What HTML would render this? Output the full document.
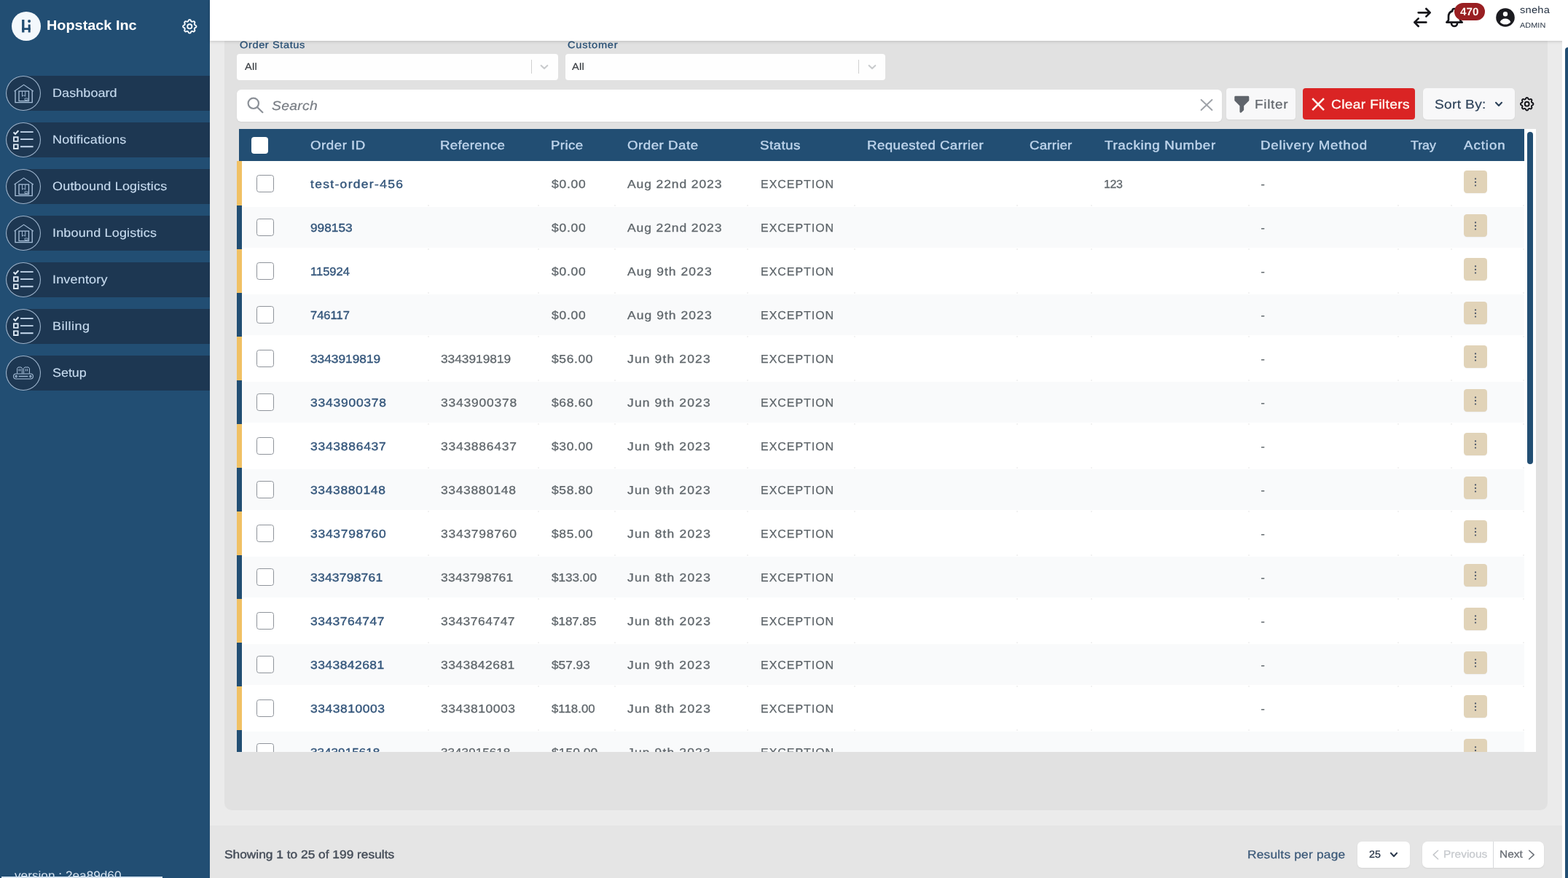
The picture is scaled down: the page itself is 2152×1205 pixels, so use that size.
<!DOCTYPE html>
<html lang="en">
<head>
<meta charset="utf-8">
<title>Hopstack Inc - Orders</title>
<style>
html,body{margin:0;padding:0}
html{width:2152px;height:1205px;overflow:hidden;background:#EBEBEB}
body{width:2152px;height:1205px;overflow:hidden;position:relative;background:#EBEBEB;font-family:"Liberation Sans",sans-serif;-webkit-font-smoothing:antialiased}
.a{position:absolute;box-sizing:border-box}
.t{position:absolute;white-space:nowrap;display:block;margin:0;padding:0;font-weight:400;text-decoration:none;transform-origin:0 50%;text-rendering:geometricPrecision}
svg{position:absolute;overflow:visible}
aside,header,main,footer,nav,section{position:absolute;display:block;margin:0;padding:0}
.g{will-change:transform}
</style>
</head>
<body>
<aside class="a g" style="left:0;top:0;width:288px;height:1205px;background:#224E73;overflow:hidden">
<div class="a" style="left:16px;top:16px;width:40px;height:40px;border-radius:50%;background:#F3F8FC"><svg width="40" height="40" viewBox="0 0 40 40" fill="#224E73"><rect x="14.1" y="11" width="3.3" height="17.5"/><rect x="14.1" y="22.3" width="11.6" height="2.7"/><rect x="22.7" y="17.6" width="3" height="10.9"/><circle cx="24.1" cy="13.1" r="2.05"/></svg></div>
<h1 class="t" style="left:63.51px;top:21px;font-size:18.8px;line-height:28px;color:#FFFFFF;transform:scaleX(1.057);font-weight:700;">Hopstack Inc</h1>
<svg class="a" style="left:247.9px;top:23.8px" width="24.6" height="24.6" viewBox="0 0 24 24" fill="none" stroke="#F4F8FC" stroke-width="1.9" stroke-linecap="round" stroke-linejoin="round"><path d="M10.325 4.317c.426-1.756 2.924-1.756 3.35 0a1.724 1.724 0 002.573 1.066c1.543-.94 3.31.826 2.37 2.37a1.724 1.724 0 001.065 2.572c1.756.426 1.756 2.924 0 3.35a1.724 1.724 0 00-1.066 2.573c.94 1.543-.826 3.31-2.37 2.37a1.724 1.724 0 00-2.572 1.065c-.426 1.756-2.924 1.756-3.35 0a1.724 1.724 0 00-2.573-1.066c-1.543.94-3.31-.826-2.37-2.37a1.724 1.724 0 00-1.065-2.572c-1.756-.426-1.756-2.924 0-3.35a1.724 1.724 0 001.066-2.573c-.94-1.543.826-3.31 2.37-2.37.996.608 2.296.07 2.572-1.065z"/><circle cx="12" cy="12" r="3"/></svg>
<nav class="a" style="left:0;top:0;width:288px;height:560px">
<a class="a" style="left:0;top:104px;width:288px;height:48px;display:block">
<div class="a" style="left:32px;top:0;width:256px;height:48px;background:#1D3752"></div>
<div class="a" style="left:8px;top:0;width:48px;height:48px;border-radius:50%;background:#1D3752;box-shadow:inset 0 0 0 1.1px #9DB5CE"></div>
<div class="a" style="left:8px;top:0;width:48px;height:48px"><svg width="48" height="48" viewBox="0 0 48 48" fill="none" stroke="#A9C1DB" stroke-width="1.1" stroke-linejoin="miter"><path d="M11.6 21.2 24.6 12.4 37.8 21.2"/><path d="M13 20.6V36.6H36.2V20.6" stroke-width="1.35"/><path d="M18 21.2H31.5V34.6H18Z" stroke-width="1.3"/><path d="M22.5 21.4V28.2L24.6 26.6 26.7 28.2V21.4" stroke-width="0.9"/><path d="M26 31H30V33.4H26Z" stroke-width="0.8"/></svg></div>
<span class="t" style="left:71.83px;top:11px;font-size:16.4px;line-height:26px;color:#C6DAEE;letter-spacing:0.05px;transform:scaleX(1.1);-webkit-text-stroke:0.15px #C6DAEE;">Dashboard</span>
</a>
<a class="a" style="left:0;top:168px;width:288px;height:48px;display:block">
<div class="a" style="left:32px;top:0;width:256px;height:48px;background:#1D3752"></div>
<div class="a" style="left:8px;top:0;width:48px;height:48px;border-radius:50%;background:#1D3752;box-shadow:inset 0 0 0 1.1px #9DB5CE"></div>
<div class="a" style="left:8px;top:0;width:48px;height:48px"><svg width="48" height="48" viewBox="0 0 48 48" fill="none" stroke="#DCE8F4" stroke-width="2"><path d="M10.6 13.6 13 16 17.4 11.2" stroke-width="2.1"/><path d="M20 13.1H37.6M20 23.1H37.6M20 33.2H37.6" stroke="#C9DCF0" stroke-width="1.9"/><path d="M11 20.3H16.6V25.9H11ZM11 30.4H16.6V36H11Z" stroke-width="1.9"/></svg></div>
<span class="t" style="left:71.83px;top:11px;font-size:16.4px;line-height:26px;color:#C6DAEE;letter-spacing:0.23px;transform:scaleX(1.1);-webkit-text-stroke:0.15px #C6DAEE;">Notifications</span>
</a>
<a class="a" style="left:0;top:232px;width:288px;height:48px;display:block">
<div class="a" style="left:32px;top:0;width:256px;height:48px;background:#1D3752"></div>
<div class="a" style="left:8px;top:0;width:48px;height:48px;border-radius:50%;background:#1D3752;box-shadow:inset 0 0 0 1.1px #9DB5CE"></div>
<div class="a" style="left:8px;top:0;width:48px;height:48px"><svg width="48" height="48" viewBox="0 0 48 48" fill="none" stroke="#A9C1DB" stroke-width="1.1" stroke-linejoin="miter"><path d="M11.6 21.2 24.6 12.4 37.8 21.2"/><path d="M13 20.6V36.6H36.2V20.6" stroke-width="1.35"/><path d="M18 21.2H31.5V34.6H18Z" stroke-width="1.3"/><path d="M22.5 21.4V28.2L24.6 26.6 26.7 28.2V21.4" stroke-width="0.9"/><path d="M26 31H30V33.4H26Z" stroke-width="0.8"/></svg></div>
<span class="t" style="left:72.46px;top:11px;font-size:16.4px;line-height:26px;color:#C6DAEE;letter-spacing:0.15px;transform:scaleX(1.1);-webkit-text-stroke:0.15px #C6DAEE;">Outbound Logistics</span>
</a>
<a class="a" style="left:0;top:296px;width:288px;height:48px;display:block">
<div class="a" style="left:32px;top:0;width:256px;height:48px;background:#1D3752"></div>
<div class="a" style="left:8px;top:0;width:48px;height:48px;border-radius:50%;background:#1D3752;box-shadow:inset 0 0 0 1.1px #9DB5CE"></div>
<div class="a" style="left:8px;top:0;width:48px;height:48px"><svg width="48" height="48" viewBox="0 0 48 48" fill="none" stroke="#A9C1DB" stroke-width="1.1" stroke-linejoin="miter"><path d="M11.6 21.2 24.6 12.4 37.8 21.2"/><path d="M13 20.6V36.6H36.2V20.6" stroke-width="1.35"/><path d="M18 21.2H31.5V34.6H18Z" stroke-width="1.3"/><path d="M22.5 21.4V28.2L24.6 26.6 26.7 28.2V21.4" stroke-width="0.9"/><path d="M26 31H30V33.4H26Z" stroke-width="0.8"/></svg></div>
<span class="t" style="left:71.65px;top:11px;font-size:16.4px;line-height:26px;color:#C6DAEE;letter-spacing:0.15px;transform:scaleX(1.1);-webkit-text-stroke:0.15px #C6DAEE;">Inbound Logistics</span>
</a>
<a class="a" style="left:0;top:360px;width:288px;height:48px;display:block">
<div class="a" style="left:32px;top:0;width:256px;height:48px;background:#1D3752"></div>
<div class="a" style="left:8px;top:0;width:48px;height:48px;border-radius:50%;background:#1D3752;box-shadow:inset 0 0 0 1.1px #9DB5CE"></div>
<div class="a" style="left:8px;top:0;width:48px;height:48px"><svg width="48" height="48" viewBox="0 0 48 48" fill="none" stroke="#DCE8F4" stroke-width="2"><path d="M10.6 13.6 13 16 17.4 11.2" stroke-width="2.1"/><path d="M20 13.1H37.6M20 23.1H37.6M20 33.2H37.6" stroke="#C9DCF0" stroke-width="1.9"/><path d="M11 20.3H16.6V25.9H11ZM11 30.4H16.6V36H11Z" stroke-width="1.9"/></svg></div>
<span class="t" style="left:71.65px;top:11px;font-size:16.4px;line-height:26px;color:#C6DAEE;letter-spacing:0.15px;transform:scaleX(1.1);-webkit-text-stroke:0.15px #C6DAEE;">Inventory</span>
</a>
<a class="a" style="left:0;top:424px;width:288px;height:48px;display:block">
<div class="a" style="left:32px;top:0;width:256px;height:48px;background:#1D3752"></div>
<div class="a" style="left:8px;top:0;width:48px;height:48px;border-radius:50%;background:#1D3752;box-shadow:inset 0 0 0 1.1px #9DB5CE"></div>
<div class="a" style="left:8px;top:0;width:48px;height:48px"><svg width="48" height="48" viewBox="0 0 48 48" fill="none" stroke="#DCE8F4" stroke-width="2"><path d="M10.6 13.6 13 16 17.4 11.2" stroke-width="2.1"/><path d="M20 13.1H37.6M20 23.1H37.6M20 33.2H37.6" stroke="#C9DCF0" stroke-width="1.9"/><path d="M11 20.3H16.6V25.9H11ZM11 30.4H16.6V36H11Z" stroke-width="1.9"/></svg></div>
<span class="t" style="left:71.83px;top:11px;font-size:16.4px;line-height:26px;color:#C6DAEE;letter-spacing:0.44px;transform:scaleX(1.1);-webkit-text-stroke:0.15px #C6DAEE;">Billing</span>
</a>
<a class="a" style="left:0;top:488px;width:288px;height:48px;display:block">
<div class="a" style="left:32px;top:0;width:256px;height:48px;background:#1D3752"></div>
<div class="a" style="left:8px;top:0;width:48px;height:48px;border-radius:50%;background:#1D3752;box-shadow:inset 0 0 0 1.1px #9DB5CE"></div>
<div class="a" style="left:8px;top:0;width:48px;height:48px"><svg width="48" height="48" viewBox="0 0 48 48" fill="none" stroke="#A9C1DB" stroke-width="1.1"><rect x="10.6" y="25" width="26.8" height="7" rx="3.5"/><path d="M17.6 28.5H30.4" stroke-width="1.3"/><circle cx="14.2" cy="28.5" r="1.1"/><circle cx="33.8" cy="28.5" r="1.1"/><path d="M15.6 24.6V17.4L17 16H21L22.4 17.4V24.6M24.6 24.6V17.4L26 16H31L32.4 17.4V24.6" stroke-width="1"/><path d="M18 18.4V21.4M20 18.4V21.4M27.4 18.4V21.4M29.6 18.4V21.4" stroke-width="1"/></svg></div>
<span class="t" style="left:72.47px;top:11px;font-size:16.4px;line-height:26px;color:#C6DAEE;transform:scaleX(1.092);-webkit-text-stroke:0.15px #C6DAEE;">Setup</span>
</a>
</nav>
<span class="t" style="left:20.16px;top:1189px;font-size:16.4px;line-height:26px;color:#D6E3F0;transform:scaleX(1.051);">version : 2ea89d60</span>
<div class="a" style="left:2px;top:1203px;width:221px;height:2px;background:#D9E6F2"></div>
</aside>
<header class="a g" style="left:0;top:0;width:2152px;height:0;z-index:5">
<div class="a" style="left:288px;top:0px;width:1864px;height:56px;background:#FFFFFF;box-shadow:0 1px 4px rgba(0,0,0,.17);"></div>
<svg class="a" style="left:1936px;top:7.5px" width="32" height="32" viewBox="0 0 24 24" fill="none" stroke="#17171C" stroke-width="2" stroke-linecap="round" stroke-linejoin="round"><path d="M8 7h12m0 0l-4-4m4 4l-4 4m0 6H4m0 0l4 4m-4-4l4-4"/></svg>
<svg class="a" style="left:1979.7px;top:8px" width="32" height="32" viewBox="0 0 24 24" fill="none" stroke="#17171C" stroke-width="2" stroke-linecap="round" stroke-linejoin="round"><path d="M15 17h5l-1.405-1.405A2.032 2.032 0 0118 14.158V11a6.002 6.002 0 00-4-5.659V5a2 2 0 10-4 0v.341C7.67 6.165 6 8.388 6 11v3.159c0 .538-.214 1.055-.595 1.436L4 17h5m6 0v1a3 3 0 11-6 0v-1m6 0H9"/></svg>
<div class="a" style="left:1996.1px;top:3.9px;width:41.9px;height:24px;background:#991F22;border-radius:12px;"></div>
<span class="t" style="left:2004.27px;top:6px;font-size:14.8px;line-height:22px;color:#FFF7F2;transform:scaleX(1.029);font-weight:700;">470</span>
<svg class="a" style="left:2050px;top:7.9px" width="32" height="32" viewBox="0 0 20 20" fill="#1B1B20"><path fill-rule="evenodd" d="M18 10a8 8 0 11-16 0 8 8 0 0116 0zm-6-3a2 2 0 11-4 0 2 2 0 014 0zm-2 4a5 5 0 00-4.546 2.916A5.986 5.986 0 0010 16a5.986 5.986 0 004.546-2.084A5 5 0 0010 11z" clip-rule="evenodd"/></svg>
<span class="t" style="left:2085.8px;top:4px;font-size:13.3px;line-height:20px;color:#1E2B3C;letter-spacing:0.24px;transform:scaleX(1.1);">sneha</span>
<span class="t" style="left:2086.2px;top:28px;font-size:9.9px;line-height:16px;color:#1E2B3C;letter-spacing:0.06px;transform:scaleX(1.1);">ADMIN</span>
</header>
<main class="a g" style="left:0;top:0;width:2152px;height:0">
<div class="a" style="left:308px;top:40px;width:1816px;height:1072px;background:#E1E1E1;border-radius:10px;"></div>
<label class="t" style="left:328.69px;top:52px;font-size:13.3px;line-height:20px;color:#2A5176;letter-spacing:0.53px;transform:scaleX(1.1);-webkit-text-stroke:0.3px #2A5176;">Order Status</label>
<label class="t" style="left:778.62px;top:52px;font-size:13.3px;line-height:20px;color:#2A5176;letter-spacing:0.67px;transform:scaleX(1.1);-webkit-text-stroke:0.3px #2A5176;">Customer</label>
<div class="a" style="left:324.8px;top:74px;width:441.2px;height:36px;background:#FEFEFE;border-radius:4px;"></div>
<span class="t" style="left:335.88px;top:82px;font-size:13.3px;line-height:20px;color:#33373C;letter-spacing:0.24px;transform:scaleX(1.1);-webkit-text-stroke:0.15px #33373C;">All</span>
<div class="a" style="left:728.8px;top:82.2px;width:1px;height:19.2px;background:#CFCFCF;"></div>
<svg class="a" style="left:737.4px;top:82.3px" width="20" height="20" viewBox="0 0 20 20" fill="none" stroke="#C9CBCD" stroke-width="2.1" stroke-linecap="round" stroke-linejoin="round"><path d="M5.7 7.9 10 12.1 14.3 7.9"/></svg>
<div class="a" style="left:775.9px;top:74px;width:439.6px;height:36px;background:#FEFEFE;border-radius:4px;"></div>
<span class="t" style="left:785.38px;top:82px;font-size:13.3px;line-height:20px;color:#33373C;letter-spacing:0.24px;transform:scaleX(1.1);-webkit-text-stroke:0.15px #33373C;">All</span>
<div class="a" style="left:1178.3px;top:82.2px;width:1px;height:19.2px;background:#CFCFCF;"></div>
<svg class="a" style="left:1186.9px;top:82.3px" width="20" height="20" viewBox="0 0 20 20" fill="none" stroke="#C9CBCD" stroke-width="2.1" stroke-linecap="round" stroke-linejoin="round"><path d="M5.7 7.9 10 12.1 14.3 7.9"/></svg>
<div class="a" style="left:325px;top:122.6px;width:1351.6px;height:44px;background:#FFFFFF;border-radius:6px;box-shadow:0 1px 2px rgba(0,0,0,.06);"></div>
<svg class="a" style="left:336px;top:130px" width="30" height="30" viewBox="0 0 30 30" fill="none" stroke="#8C9198" stroke-width="2.2" stroke-linecap="round"><circle cx="11.8" cy="11.8" r="7.2"/><path d="M17.2 17.2 24.4 24.2"/></svg>
<span class="t" style="left:373.37px;top:132px;font-size:17.6px;line-height:26px;color:#787D84;letter-spacing:0.24px;transform:scaleX(1.1);font-style:italic;-webkit-text-stroke:0.2px #787D84;">Search</span>
<svg class="a" style="left:1645.6px;top:134.4px" width="20" height="20" viewBox="0 0 20 20" fill="none" stroke="#9EA2A8" stroke-width="1.9" stroke-linecap="round"><path d="M2.6 3 17.4 17M17.4 3 2.6 17"/></svg>
<div class="a" style="left:1682.5px;top:121px;width:95px;height:43.4px;background:#F8F8F9;border-radius:4px;box-shadow:0 1px 2px rgba(0,0,0,.05);"></div>
<svg class="a" style="left:1690.1px;top:128.5px" width="28.6" height="28.6" viewBox="0 0 20 20" fill="#5F646B"><path fill-rule="evenodd" d="M3 3a1 1 0 011-1h12a1 1 0 011 1v3a1 1 0 01-.293.707L12 11.414V15a1 1 0 01-.293.707l-2 2A1 1 0 018 17v-5.586L3.293 6.707A1 1 0 013 6V3z" clip-rule="evenodd"/></svg>
<span class="t" style="left:1722.37px;top:130px;font-size:17.4px;line-height:26px;color:#62676D;letter-spacing:0.56px;transform:scaleX(1.1);-webkit-text-stroke:0.2px #62676D;">Filter</span>
<div class="a" style="left:1787.5px;top:121px;width:154.7px;height:43.4px;background:#DA2424;border-radius:4px;"></div>
<svg class="a" style="left:1798.5px;top:132.5px" width="20" height="20" viewBox="0 0 20 20" fill="none" stroke="#FFF6EE" stroke-width="2.6" stroke-linecap="butt"><path d="M2.2 2.2 18 18.2M18 2.2 2.2 18.2"/></svg>
<span class="t" style="left:1826.92px;top:130px;font-size:17.4px;line-height:26px;color:#FFF8F2;letter-spacing:0.33px;transform:scaleX(1.1);-webkit-text-stroke:0.35px #FFF8F2;">Clear Filters</span>
<div class="a" style="left:1952.6px;top:121px;width:126.1px;height:43.4px;background:#F8F8F9;border-radius:5px;box-shadow:0 1px 2px rgba(0,0,0,.05);"></div>
<span class="t" style="left:1968.54px;top:130px;font-size:17.4px;line-height:26px;color:#2E435A;letter-spacing:0.3px;transform:scaleX(1.1);-webkit-text-stroke:0.2px #2E435A;">Sort By:</span>
<svg class="a" style="left:2049.9px;top:135.8px" width="14" height="14" viewBox="0 0 14 14" fill="none" stroke="#2E435A" stroke-width="2.1" stroke-linecap="round" stroke-linejoin="round"><path d="M3 4.8 7 9 11 4.8"/></svg>
<svg class="a" style="left:2083.8px;top:131px" width="23.4" height="23.4" viewBox="0 0 24 24" fill="none" stroke="#131318" stroke-width="2" stroke-linecap="round" stroke-linejoin="round"><path d="M10.325 4.317c.426-1.756 2.924-1.756 3.35 0a1.724 1.724 0 002.573 1.066c1.543-.94 3.31.826 2.37 2.37a1.724 1.724 0 001.065 2.572c1.756.426 1.756 2.924 0 3.35a1.724 1.724 0 00-1.066 2.573c.94 1.543-.826 3.31-2.37 2.37a1.724 1.724 0 00-2.572 1.065c-.426 1.756-2.924 1.756-3.35 0a1.724 1.724 0 00-2.573-1.066c-1.543.94-3.31-.826-2.37-2.37a1.724 1.724 0 00-1.065-2.572c-1.756-.426-1.756-2.924 0-3.35a1.724 1.724 0 001.066-2.573c-.94-1.543.826-3.31 2.37-2.37.996.608 2.296.07 2.572-1.065z"/><circle cx="12" cy="12" r="3"/></svg>
<section class="a" style="left:0;top:0;width:2152px;height:1032px;overflow:hidden">
<div class="a" style="left:324.6px;top:177px;width:1783px;height:855px;background:#FFFFFF;"></div>
<div class="a" style="left:324.6px;top:177px;width:3.5px;height:44.2px;background:#E1E1E1;"></div>
<div class="a" style="left:328.1px;top:177px;width:1763.9px;height:44.2px;background:#224E73;"></div>
<div class="a" style="left:344.8px;top:188.1px;width:22.8px;height:23.1px;background:#FFFFFF;border-radius:4px;"></div>
<span class="t" style="left:425.96px;top:187px;font-size:17px;line-height:26px;color:#BFD5EC;letter-spacing:0.47px;transform:scaleX(1.1);-webkit-text-stroke:0.4px #BFD5EC;">Order ID</span>
<span class="t" style="left:604.1px;top:187px;font-size:17px;line-height:26px;color:#BFD5EC;letter-spacing:0.29px;transform:scaleX(1.1);-webkit-text-stroke:0.4px #BFD5EC;">Reference</span>
<span class="t" style="left:755.8px;top:187px;font-size:17px;line-height:26px;color:#BFD5EC;letter-spacing:0.35px;transform:scaleX(1.1);-webkit-text-stroke:0.4px #BFD5EC;">Price</span>
<span class="t" style="left:860.96px;top:187px;font-size:17px;line-height:26px;color:#BFD5EC;letter-spacing:0.46px;transform:scaleX(1.1);-webkit-text-stroke:0.4px #BFD5EC;">Order Date</span>
<span class="t" style="left:1042.96px;top:187px;font-size:17px;line-height:26px;color:#BFD5EC;letter-spacing:0.42px;transform:scaleX(1.1);-webkit-text-stroke:0.4px #BFD5EC;">Status</span>
<span class="t" style="left:1190.1px;top:187px;font-size:17px;line-height:26px;color:#BFD5EC;letter-spacing:0.39px;transform:scaleX(1.1);-webkit-text-stroke:0.4px #BFD5EC;">Requested Carrier</span>
<span class="t" style="left:1413.37px;top:187px;font-size:17px;line-height:26px;color:#BFD5EC;letter-spacing:0.18px;transform:scaleX(1.1);-webkit-text-stroke:0.4px #BFD5EC;">Carrier</span>
<span class="t" style="left:1515.83px;top:187px;font-size:17px;line-height:26px;color:#BFD5EC;letter-spacing:0.61px;transform:scaleX(1.1);-webkit-text-stroke:0.4px #BFD5EC;">Tracking Number</span>
<span class="t" style="left:1729.8px;top:187px;font-size:17px;line-height:26px;color:#BFD5EC;letter-spacing:0.71px;transform:scaleX(1.1);-webkit-text-stroke:0.4px #BFD5EC;">Delivery Method</span>
<span class="t" style="left:1936.04px;top:187px;font-size:17px;line-height:26px;color:#BFD5EC;transform:scaleX(1.045);-webkit-text-stroke:0.4px #BFD5EC;">Tray</span>
<span class="t" style="left:2009.4px;top:187px;font-size:17px;line-height:26px;color:#BFD5EC;letter-spacing:0.86px;transform:scaleX(1.1);-webkit-text-stroke:0.4px #BFD5EC;">Action</span>
<div class="a" style="left:324.6px;top:221.2px;width:7.6px;height:60.8px;background:#F0C164;"></div>
<div class="a" style="left:352.1px;top:240.1px;width:24px;height:23.9px;background:#FFFFFF;border-radius:3.6px;border:1.4px solid #8F949B;"></div>
<span class="t" style="left:425.84px;top:242px;font-size:15.9px;line-height:24px;color:#34567B;letter-spacing:1.2px;transform:scaleX(1.1);-webkit-text-stroke:0.4px #34567B;">test-order-456</span>
<span class="t" style="left:757.08px;top:242px;font-size:15.9px;line-height:24px;color:#5F666B;letter-spacing:0.66px;transform:scaleX(1.1);-webkit-text-stroke:0.3px #5F666B;">$0.00</span>
<span class="t" style="left:861.15px;top:242px;font-size:15.9px;line-height:24px;color:#5F666B;letter-spacing:0.82px;transform:scaleX(1.1);-webkit-text-stroke:0.3px #5F666B;">Aug 22nd 2023</span>
<span class="t" style="left:1044.08px;top:242px;font-size:15.9px;line-height:24px;color:#5F666B;letter-spacing:1.02px;-webkit-text-stroke:0.3px #5F666B;">EXCEPTION</span>
<span class="t" style="left:1515.06px;top:242px;font-size:15.9px;line-height:24px;color:#5F666B;letter-spacing:-0.35px;-webkit-text-stroke:0.3px #5F666B;">123</span>
<span class="t" style="left:1730.57px;top:242px;font-size:15.9px;line-height:24px;color:#5F666B;-webkit-text-stroke:0.3px #5F666B;">-</span>
<div class="a" style="left:2009.2px;top:234.1px;width:31.7px;height:31.4px;background:#E1D3B8;border-radius:4.2px;box-shadow:0 1px 1px rgba(0,0,0,.04);"><svg class="a" style="left:8px;top:8px" width="16" height="16" viewBox="0 0 16 16" fill="#4F596A"><circle cx="8" cy="3.4" r="1.15"/><circle cx="8" cy="8" r="1.15"/><circle cx="8" cy="12.6" r="1.15"/></svg></div>
<div class="a" style="left:324.6px;top:282px;width:7.6px;height:60px;background:#224E73;"></div>
<div class="a" style="left:332.2px;top:283.8px;width:1759.8px;height:56.7px;background:#F9FAFB;"></div>
<div class="a" style="left:352.1px;top:300.1px;width:24px;height:23.9px;background:#FFFFFF;border-radius:3.6px;border:1.4px solid #8F949B;"></div>
<span class="t" style="left:426.02px;top:302px;font-size:15.9px;line-height:24px;color:#34567B;transform:scaleX(1.089);-webkit-text-stroke:0.4px #34567B;">998153</span>
<span class="t" style="left:757.08px;top:302px;font-size:15.9px;line-height:24px;color:#5F666B;letter-spacing:0.66px;transform:scaleX(1.1);-webkit-text-stroke:0.3px #5F666B;">$0.00</span>
<span class="t" style="left:861.15px;top:302px;font-size:15.9px;line-height:24px;color:#5F666B;letter-spacing:0.82px;transform:scaleX(1.1);-webkit-text-stroke:0.3px #5F666B;">Aug 22nd 2023</span>
<span class="t" style="left:1044.08px;top:302px;font-size:15.9px;line-height:24px;color:#5F666B;letter-spacing:1.02px;-webkit-text-stroke:0.3px #5F666B;">EXCEPTION</span>
<span class="t" style="left:1730.57px;top:302px;font-size:15.9px;line-height:24px;color:#5F666B;-webkit-text-stroke:0.3px #5F666B;">-</span>
<div class="a" style="left:2009.2px;top:294.1px;width:31.7px;height:31.4px;background:#E1D3B8;border-radius:4.2px;box-shadow:0 1px 1px rgba(0,0,0,.04);"><svg class="a" style="left:8px;top:8px" width="16" height="16" viewBox="0 0 16 16" fill="#4F596A"><circle cx="8" cy="3.4" r="1.15"/><circle cx="8" cy="8" r="1.15"/><circle cx="8" cy="12.6" r="1.15"/></svg></div>
<div class="a" style="left:324.6px;top:342px;width:7.6px;height:60px;background:#F0C164;"></div>
<div class="a" style="left:352.1px;top:360.1px;width:24px;height:23.9px;background:#FFFFFF;border-radius:3.6px;border:1.4px solid #8F949B;"></div>
<span class="t" style="left:425.56px;top:362px;font-size:15.9px;line-height:24px;color:#34567B;transform:scaleX(1.04);-webkit-text-stroke:0.4px #34567B;">115924</span>
<span class="t" style="left:757.08px;top:362px;font-size:15.9px;line-height:24px;color:#5F666B;letter-spacing:0.66px;transform:scaleX(1.1);-webkit-text-stroke:0.3px #5F666B;">$0.00</span>
<span class="t" style="left:861.15px;top:362px;font-size:15.9px;line-height:24px;color:#5F666B;letter-spacing:0.96px;transform:scaleX(1.1);-webkit-text-stroke:0.3px #5F666B;">Aug 9th 2023</span>
<span class="t" style="left:1044.08px;top:362px;font-size:15.9px;line-height:24px;color:#5F666B;letter-spacing:1.02px;-webkit-text-stroke:0.3px #5F666B;">EXCEPTION</span>
<span class="t" style="left:1730.57px;top:362px;font-size:15.9px;line-height:24px;color:#5F666B;-webkit-text-stroke:0.3px #5F666B;">-</span>
<div class="a" style="left:2009.2px;top:354.1px;width:31.7px;height:31.4px;background:#E1D3B8;border-radius:4.2px;box-shadow:0 1px 1px rgba(0,0,0,.04);"><svg class="a" style="left:8px;top:8px" width="16" height="16" viewBox="0 0 16 16" fill="#4F596A"><circle cx="8" cy="3.4" r="1.15"/><circle cx="8" cy="8" r="1.15"/><circle cx="8" cy="12.6" r="1.15"/></svg></div>
<div class="a" style="left:324.6px;top:402px;width:7.6px;height:60px;background:#224E73;"></div>
<div class="a" style="left:332.2px;top:403.8px;width:1759.8px;height:56.7px;background:#F9FAFB;"></div>
<div class="a" style="left:352.1px;top:420.1px;width:24px;height:23.9px;background:#FFFFFF;border-radius:3.6px;border:1.4px solid #8F949B;"></div>
<span class="t" style="left:425.97px;top:422px;font-size:15.9px;line-height:24px;color:#34567B;transform:scaleX(1.038);-webkit-text-stroke:0.4px #34567B;">746117</span>
<span class="t" style="left:757.08px;top:422px;font-size:15.9px;line-height:24px;color:#5F666B;letter-spacing:0.66px;transform:scaleX(1.1);-webkit-text-stroke:0.3px #5F666B;">$0.00</span>
<span class="t" style="left:861.15px;top:422px;font-size:15.9px;line-height:24px;color:#5F666B;letter-spacing:0.96px;transform:scaleX(1.1);-webkit-text-stroke:0.3px #5F666B;">Aug 9th 2023</span>
<span class="t" style="left:1044.08px;top:422px;font-size:15.9px;line-height:24px;color:#5F666B;letter-spacing:1.02px;-webkit-text-stroke:0.3px #5F666B;">EXCEPTION</span>
<span class="t" style="left:1730.57px;top:422px;font-size:15.9px;line-height:24px;color:#5F666B;-webkit-text-stroke:0.3px #5F666B;">-</span>
<div class="a" style="left:2009.2px;top:414.1px;width:31.7px;height:31.4px;background:#E1D3B8;border-radius:4.2px;box-shadow:0 1px 1px rgba(0,0,0,.04);"><svg class="a" style="left:8px;top:8px" width="16" height="16" viewBox="0 0 16 16" fill="#4F596A"><circle cx="8" cy="3.4" r="1.15"/><circle cx="8" cy="8" r="1.15"/><circle cx="8" cy="12.6" r="1.15"/></svg></div>
<div class="a" style="left:324.6px;top:462px;width:7.6px;height:60px;background:#F0C164;"></div>
<div class="a" style="left:352.1px;top:480.1px;width:24px;height:23.9px;background:#FFFFFF;border-radius:3.6px;border:1.4px solid #8F949B;"></div>
<span class="t" style="left:426.15px;top:482px;font-size:15.9px;line-height:24px;color:#34567B;transform:scaleX(1.088);-webkit-text-stroke:0.4px #34567B;">3343919819</span>
<span class="t" style="left:604.8px;top:482px;font-size:15.9px;line-height:24px;color:#5F666B;transform:scaleX(1.089);-webkit-text-stroke:0.3px #5F666B;">3343919819</span>
<span class="t" style="left:757.08px;top:482px;font-size:15.9px;line-height:24px;color:#5F666B;letter-spacing:0.54px;transform:scaleX(1.1);-webkit-text-stroke:0.3px #5F666B;">$56.00</span>
<span class="t" style="left:860.89px;top:482px;font-size:15.9px;line-height:24px;color:#5F666B;letter-spacing:1.04px;transform:scaleX(1.1);-webkit-text-stroke:0.3px #5F666B;">Jun 9th 2023</span>
<span class="t" style="left:1044.08px;top:482px;font-size:15.9px;line-height:24px;color:#5F666B;letter-spacing:1.02px;-webkit-text-stroke:0.3px #5F666B;">EXCEPTION</span>
<span class="t" style="left:1730.57px;top:482px;font-size:15.9px;line-height:24px;color:#5F666B;-webkit-text-stroke:0.3px #5F666B;">-</span>
<div class="a" style="left:2009.2px;top:474.1px;width:31.7px;height:31.4px;background:#E1D3B8;border-radius:4.2px;box-shadow:0 1px 1px rgba(0,0,0,.04);"><svg class="a" style="left:8px;top:8px" width="16" height="16" viewBox="0 0 16 16" fill="#4F596A"><circle cx="8" cy="3.4" r="1.15"/><circle cx="8" cy="8" r="1.15"/><circle cx="8" cy="12.6" r="1.15"/></svg></div>
<div class="a" style="left:324.6px;top:522px;width:7.6px;height:60px;background:#224E73;"></div>
<div class="a" style="left:332.2px;top:523.8px;width:1759.8px;height:56.7px;background:#F9FAFB;"></div>
<div class="a" style="left:352.1px;top:540.1px;width:24px;height:23.9px;background:#FFFFFF;border-radius:3.6px;border:1.4px solid #8F949B;"></div>
<span class="t" style="left:426.14px;top:542px;font-size:15.9px;line-height:24px;color:#34567B;letter-spacing:0.69px;transform:scaleX(1.1);-webkit-text-stroke:0.4px #34567B;">3343900378</span>
<span class="t" style="left:604.79px;top:542px;font-size:15.9px;line-height:24px;color:#5F666B;letter-spacing:0.7px;transform:scaleX(1.1);-webkit-text-stroke:0.3px #5F666B;">3343900378</span>
<span class="t" style="left:757.08px;top:542px;font-size:15.9px;line-height:24px;color:#5F666B;letter-spacing:0.54px;transform:scaleX(1.1);-webkit-text-stroke:0.3px #5F666B;">$68.60</span>
<span class="t" style="left:860.89px;top:542px;font-size:15.9px;line-height:24px;color:#5F666B;letter-spacing:1.04px;transform:scaleX(1.1);-webkit-text-stroke:0.3px #5F666B;">Jun 9th 2023</span>
<span class="t" style="left:1044.08px;top:542px;font-size:15.9px;line-height:24px;color:#5F666B;letter-spacing:1.02px;-webkit-text-stroke:0.3px #5F666B;">EXCEPTION</span>
<span class="t" style="left:1730.57px;top:542px;font-size:15.9px;line-height:24px;color:#5F666B;-webkit-text-stroke:0.3px #5F666B;">-</span>
<div class="a" style="left:2009.2px;top:534.1px;width:31.7px;height:31.4px;background:#E1D3B8;border-radius:4.2px;box-shadow:0 1px 1px rgba(0,0,0,.04);"><svg class="a" style="left:8px;top:8px" width="16" height="16" viewBox="0 0 16 16" fill="#4F596A"><circle cx="8" cy="3.4" r="1.15"/><circle cx="8" cy="8" r="1.15"/><circle cx="8" cy="12.6" r="1.15"/></svg></div>
<div class="a" style="left:324.6px;top:582px;width:7.6px;height:60px;background:#F0C164;"></div>
<div class="a" style="left:352.1px;top:600.1px;width:24px;height:23.9px;background:#FFFFFF;border-radius:3.6px;border:1.4px solid #8F949B;"></div>
<span class="t" style="left:426.14px;top:602px;font-size:15.9px;line-height:24px;color:#34567B;letter-spacing:0.66px;transform:scaleX(1.1);-webkit-text-stroke:0.4px #34567B;">3343886437</span>
<span class="t" style="left:604.79px;top:602px;font-size:15.9px;line-height:24px;color:#5F666B;letter-spacing:0.67px;transform:scaleX(1.1);-webkit-text-stroke:0.3px #5F666B;">3343886437</span>
<span class="t" style="left:757.08px;top:602px;font-size:15.9px;line-height:24px;color:#5F666B;letter-spacing:0.54px;transform:scaleX(1.1);-webkit-text-stroke:0.3px #5F666B;">$30.00</span>
<span class="t" style="left:860.89px;top:602px;font-size:15.9px;line-height:24px;color:#5F666B;letter-spacing:1.04px;transform:scaleX(1.1);-webkit-text-stroke:0.3px #5F666B;">Jun 9th 2023</span>
<span class="t" style="left:1044.08px;top:602px;font-size:15.9px;line-height:24px;color:#5F666B;letter-spacing:1.02px;-webkit-text-stroke:0.3px #5F666B;">EXCEPTION</span>
<span class="t" style="left:1730.57px;top:602px;font-size:15.9px;line-height:24px;color:#5F666B;-webkit-text-stroke:0.3px #5F666B;">-</span>
<div class="a" style="left:2009.2px;top:594.1px;width:31.7px;height:31.4px;background:#E1D3B8;border-radius:4.2px;box-shadow:0 1px 1px rgba(0,0,0,.04);"><svg class="a" style="left:8px;top:8px" width="16" height="16" viewBox="0 0 16 16" fill="#4F596A"><circle cx="8" cy="3.4" r="1.15"/><circle cx="8" cy="8" r="1.15"/><circle cx="8" cy="12.6" r="1.15"/></svg></div>
<div class="a" style="left:324.6px;top:642px;width:7.6px;height:60px;background:#224E73;"></div>
<div class="a" style="left:332.2px;top:643.8px;width:1759.8px;height:56.7px;background:#F9FAFB;"></div>
<div class="a" style="left:352.1px;top:660.1px;width:24px;height:23.9px;background:#FFFFFF;border-radius:3.6px;border:1.4px solid #8F949B;"></div>
<span class="t" style="left:426.14px;top:662px;font-size:15.9px;line-height:24px;color:#34567B;letter-spacing:0.57px;transform:scaleX(1.1);-webkit-text-stroke:0.4px #34567B;">3343880148</span>
<span class="t" style="left:604.79px;top:662px;font-size:15.9px;line-height:24px;color:#5F666B;letter-spacing:0.58px;transform:scaleX(1.1);-webkit-text-stroke:0.3px #5F666B;">3343880148</span>
<span class="t" style="left:757.08px;top:662px;font-size:15.9px;line-height:24px;color:#5F666B;letter-spacing:0.54px;transform:scaleX(1.1);-webkit-text-stroke:0.3px #5F666B;">$58.80</span>
<span class="t" style="left:860.89px;top:662px;font-size:15.9px;line-height:24px;color:#5F666B;letter-spacing:1.04px;transform:scaleX(1.1);-webkit-text-stroke:0.3px #5F666B;">Jun 9th 2023</span>
<span class="t" style="left:1044.08px;top:662px;font-size:15.9px;line-height:24px;color:#5F666B;letter-spacing:1.02px;-webkit-text-stroke:0.3px #5F666B;">EXCEPTION</span>
<span class="t" style="left:1730.57px;top:662px;font-size:15.9px;line-height:24px;color:#5F666B;-webkit-text-stroke:0.3px #5F666B;">-</span>
<div class="a" style="left:2009.2px;top:654.1px;width:31.7px;height:31.4px;background:#E1D3B8;border-radius:4.2px;box-shadow:0 1px 1px rgba(0,0,0,.04);"><svg class="a" style="left:8px;top:8px" width="16" height="16" viewBox="0 0 16 16" fill="#4F596A"><circle cx="8" cy="3.4" r="1.15"/><circle cx="8" cy="8" r="1.15"/><circle cx="8" cy="12.6" r="1.15"/></svg></div>
<div class="a" style="left:324.6px;top:702px;width:7.6px;height:60px;background:#F0C164;"></div>
<div class="a" style="left:352.1px;top:720.1px;width:24px;height:23.9px;background:#FFFFFF;border-radius:3.6px;border:1.4px solid #8F949B;"></div>
<span class="t" style="left:426.14px;top:722px;font-size:15.9px;line-height:24px;color:#34567B;letter-spacing:0.66px;transform:scaleX(1.1);-webkit-text-stroke:0.4px #34567B;">3343798760</span>
<span class="t" style="left:604.79px;top:722px;font-size:15.9px;line-height:24px;color:#5F666B;letter-spacing:0.67px;transform:scaleX(1.1);-webkit-text-stroke:0.3px #5F666B;">3343798760</span>
<span class="t" style="left:757.08px;top:722px;font-size:15.9px;line-height:24px;color:#5F666B;letter-spacing:0.54px;transform:scaleX(1.1);-webkit-text-stroke:0.3px #5F666B;">$85.00</span>
<span class="t" style="left:860.89px;top:722px;font-size:15.9px;line-height:24px;color:#5F666B;letter-spacing:1.06px;transform:scaleX(1.1);-webkit-text-stroke:0.3px #5F666B;">Jun 8th 2023</span>
<span class="t" style="left:1044.08px;top:722px;font-size:15.9px;line-height:24px;color:#5F666B;letter-spacing:1.02px;-webkit-text-stroke:0.3px #5F666B;">EXCEPTION</span>
<span class="t" style="left:1730.57px;top:722px;font-size:15.9px;line-height:24px;color:#5F666B;-webkit-text-stroke:0.3px #5F666B;">-</span>
<div class="a" style="left:2009.2px;top:714.1px;width:31.7px;height:31.4px;background:#E1D3B8;border-radius:4.2px;box-shadow:0 1px 1px rgba(0,0,0,.04);"><svg class="a" style="left:8px;top:8px" width="16" height="16" viewBox="0 0 16 16" fill="#4F596A"><circle cx="8" cy="3.4" r="1.15"/><circle cx="8" cy="8" r="1.15"/><circle cx="8" cy="12.6" r="1.15"/></svg></div>
<div class="a" style="left:324.6px;top:762px;width:7.6px;height:60px;background:#224E73;"></div>
<div class="a" style="left:332.2px;top:763.8px;width:1759.8px;height:56.7px;background:#F9FAFB;"></div>
<div class="a" style="left:352.1px;top:780.1px;width:24px;height:23.9px;background:#FFFFFF;border-radius:3.6px;border:1.4px solid #8F949B;"></div>
<span class="t" style="left:426.14px;top:782px;font-size:15.9px;line-height:24px;color:#34567B;letter-spacing:0.2px;transform:scaleX(1.1);-webkit-text-stroke:0.4px #34567B;">3343798761</span>
<span class="t" style="left:604.79px;top:782px;font-size:15.9px;line-height:24px;color:#5F666B;letter-spacing:0.21px;transform:scaleX(1.1);-webkit-text-stroke:0.3px #5F666B;">3343798761</span>
<span class="t" style="left:757.08px;top:782px;font-size:15.9px;line-height:24px;color:#5F666B;transform:scaleX(1.078);-webkit-text-stroke:0.3px #5F666B;">$133.00</span>
<span class="t" style="left:860.89px;top:782px;font-size:15.9px;line-height:24px;color:#5F666B;letter-spacing:1.06px;transform:scaleX(1.1);-webkit-text-stroke:0.3px #5F666B;">Jun 8th 2023</span>
<span class="t" style="left:1044.08px;top:782px;font-size:15.9px;line-height:24px;color:#5F666B;letter-spacing:1.02px;-webkit-text-stroke:0.3px #5F666B;">EXCEPTION</span>
<span class="t" style="left:1730.57px;top:782px;font-size:15.9px;line-height:24px;color:#5F666B;-webkit-text-stroke:0.3px #5F666B;">-</span>
<div class="a" style="left:2009.2px;top:774.1px;width:31.7px;height:31.4px;background:#E1D3B8;border-radius:4.2px;box-shadow:0 1px 1px rgba(0,0,0,.04);"><svg class="a" style="left:8px;top:8px" width="16" height="16" viewBox="0 0 16 16" fill="#4F596A"><circle cx="8" cy="3.4" r="1.15"/><circle cx="8" cy="8" r="1.15"/><circle cx="8" cy="12.6" r="1.15"/></svg></div>
<div class="a" style="left:324.6px;top:822px;width:7.6px;height:60px;background:#F0C164;"></div>
<div class="a" style="left:352.1px;top:840.1px;width:24px;height:23.9px;background:#FFFFFF;border-radius:3.6px;border:1.4px solid #8F949B;"></div>
<span class="t" style="left:426.14px;top:842px;font-size:15.9px;line-height:24px;color:#34567B;letter-spacing:0.43px;transform:scaleX(1.1);-webkit-text-stroke:0.4px #34567B;">3343764747</span>
<span class="t" style="left:604.79px;top:842px;font-size:15.9px;line-height:24px;color:#5F666B;letter-spacing:0.44px;transform:scaleX(1.1);-webkit-text-stroke:0.3px #5F666B;">3343764747</span>
<span class="t" style="left:757.08px;top:842px;font-size:15.9px;line-height:24px;color:#5F666B;transform:scaleX(1.07);-webkit-text-stroke:0.3px #5F666B;">$187.85</span>
<span class="t" style="left:860.89px;top:842px;font-size:15.9px;line-height:24px;color:#5F666B;letter-spacing:1.06px;transform:scaleX(1.1);-webkit-text-stroke:0.3px #5F666B;">Jun 8th 2023</span>
<span class="t" style="left:1044.08px;top:842px;font-size:15.9px;line-height:24px;color:#5F666B;letter-spacing:1.02px;-webkit-text-stroke:0.3px #5F666B;">EXCEPTION</span>
<span class="t" style="left:1730.57px;top:842px;font-size:15.9px;line-height:24px;color:#5F666B;-webkit-text-stroke:0.3px #5F666B;">-</span>
<div class="a" style="left:2009.2px;top:834.1px;width:31.7px;height:31.4px;background:#E1D3B8;border-radius:4.2px;box-shadow:0 1px 1px rgba(0,0,0,.04);"><svg class="a" style="left:8px;top:8px" width="16" height="16" viewBox="0 0 16 16" fill="#4F596A"><circle cx="8" cy="3.4" r="1.15"/><circle cx="8" cy="8" r="1.15"/><circle cx="8" cy="12.6" r="1.15"/></svg></div>
<div class="a" style="left:324.6px;top:882px;width:7.6px;height:60px;background:#224E73;"></div>
<div class="a" style="left:332.2px;top:883.8px;width:1759.8px;height:56.7px;background:#F9FAFB;"></div>
<div class="a" style="left:352.1px;top:900.1px;width:24px;height:23.9px;background:#FFFFFF;border-radius:3.6px;border:1.4px solid #8F949B;"></div>
<span class="t" style="left:426.14px;top:902px;font-size:15.9px;line-height:24px;color:#34567B;letter-spacing:0.4px;transform:scaleX(1.1);-webkit-text-stroke:0.4px #34567B;">3343842681</span>
<span class="t" style="left:604.79px;top:902px;font-size:15.9px;line-height:24px;color:#5F666B;letter-spacing:0.41px;transform:scaleX(1.1);-webkit-text-stroke:0.3px #5F666B;">3343842681</span>
<span class="t" style="left:757.08px;top:902px;font-size:15.9px;line-height:24px;color:#5F666B;transform:scaleX(1.085);-webkit-text-stroke:0.3px #5F666B;">$57.93</span>
<span class="t" style="left:860.89px;top:902px;font-size:15.9px;line-height:24px;color:#5F666B;letter-spacing:1.04px;transform:scaleX(1.1);-webkit-text-stroke:0.3px #5F666B;">Jun 9th 2023</span>
<span class="t" style="left:1044.08px;top:902px;font-size:15.9px;line-height:24px;color:#5F666B;letter-spacing:1.02px;-webkit-text-stroke:0.3px #5F666B;">EXCEPTION</span>
<span class="t" style="left:1730.57px;top:902px;font-size:15.9px;line-height:24px;color:#5F666B;-webkit-text-stroke:0.3px #5F666B;">-</span>
<div class="a" style="left:2009.2px;top:894.1px;width:31.7px;height:31.4px;background:#E1D3B8;border-radius:4.2px;box-shadow:0 1px 1px rgba(0,0,0,.04);"><svg class="a" style="left:8px;top:8px" width="16" height="16" viewBox="0 0 16 16" fill="#4F596A"><circle cx="8" cy="3.4" r="1.15"/><circle cx="8" cy="8" r="1.15"/><circle cx="8" cy="12.6" r="1.15"/></svg></div>
<div class="a" style="left:324.6px;top:942px;width:7.6px;height:60px;background:#F0C164;"></div>
<div class="a" style="left:352.1px;top:960.1px;width:24px;height:23.9px;background:#FFFFFF;border-radius:3.6px;border:1.4px solid #8F949B;"></div>
<span class="t" style="left:426.14px;top:962px;font-size:15.9px;line-height:24px;color:#34567B;letter-spacing:0.47px;transform:scaleX(1.1);-webkit-text-stroke:0.4px #34567B;">3343810003</span>
<span class="t" style="left:604.79px;top:962px;font-size:15.9px;line-height:24px;color:#5F666B;letter-spacing:0.48px;transform:scaleX(1.1);-webkit-text-stroke:0.3px #5F666B;">3343810003</span>
<span class="t" style="left:757.08px;top:962px;font-size:15.9px;line-height:24px;color:#5F666B;transform:scaleX(1.06);-webkit-text-stroke:0.3px #5F666B;">$118.00</span>
<span class="t" style="left:860.89px;top:962px;font-size:15.9px;line-height:24px;color:#5F666B;letter-spacing:1.06px;transform:scaleX(1.1);-webkit-text-stroke:0.3px #5F666B;">Jun 8th 2023</span>
<span class="t" style="left:1044.08px;top:962px;font-size:15.9px;line-height:24px;color:#5F666B;letter-spacing:1.02px;-webkit-text-stroke:0.3px #5F666B;">EXCEPTION</span>
<span class="t" style="left:1730.57px;top:962px;font-size:15.9px;line-height:24px;color:#5F666B;-webkit-text-stroke:0.3px #5F666B;">-</span>
<div class="a" style="left:2009.2px;top:954.1px;width:31.7px;height:31.4px;background:#E1D3B8;border-radius:4.2px;box-shadow:0 1px 1px rgba(0,0,0,.04);"><svg class="a" style="left:8px;top:8px" width="16" height="16" viewBox="0 0 16 16" fill="#4F596A"><circle cx="8" cy="3.4" r="1.15"/><circle cx="8" cy="8" r="1.15"/><circle cx="8" cy="12.6" r="1.15"/></svg></div>
<div class="a" style="left:324.6px;top:1002px;width:7.6px;height:60px;background:#224E73;"></div>
<div class="a" style="left:332.2px;top:1003.8px;width:1759.8px;height:56.7px;background:#F9FAFB;"></div>
<div class="a" style="left:352.1px;top:1020.1px;width:24px;height:23.9px;background:#FFFFFF;border-radius:3.6px;border:1.4px solid #8F949B;"></div>
<span class="t" style="left:426.16px;top:1022px;font-size:15.9px;line-height:24px;color:#34567B;transform:scaleX(1.078);-webkit-text-stroke:0.4px #34567B;">3343915618</span>
<span class="t" style="left:604.81px;top:1022px;font-size:15.9px;line-height:24px;color:#5F666B;transform:scaleX(1.079);-webkit-text-stroke:0.3px #5F666B;">3343915618</span>
<span class="t" style="left:757.08px;top:1022px;font-size:15.9px;line-height:24px;color:#5F666B;transform:scaleX(1.1);-webkit-text-stroke:0.3px #5F666B;">$150.00</span>
<span class="t" style="left:860.89px;top:1022px;font-size:15.9px;line-height:24px;color:#5F666B;letter-spacing:1.04px;transform:scaleX(1.1);-webkit-text-stroke:0.3px #5F666B;">Jun 9th 2023</span>
<span class="t" style="left:1044.08px;top:1022px;font-size:15.9px;line-height:24px;color:#5F666B;letter-spacing:1.02px;-webkit-text-stroke:0.3px #5F666B;">EXCEPTION</span>
<span class="t" style="left:1730.57px;top:1022px;font-size:15.9px;line-height:24px;color:#5F666B;-webkit-text-stroke:0.3px #5F666B;">-</span>
<div class="a" style="left:2009.2px;top:1014.1px;width:31.7px;height:31.4px;background:#E1D3B8;border-radius:4.2px;box-shadow:0 1px 1px rgba(0,0,0,.04);"><svg class="a" style="left:8px;top:8px" width="16" height="16" viewBox="0 0 16 16" fill="#4F596A"><circle cx="8" cy="3.4" r="1.15"/><circle cx="8" cy="8" r="1.15"/><circle cx="8" cy="12.6" r="1.15"/></svg></div>
<div class="a" style="left:586.9px;top:252px;width:2px;height:780px;background:linear-gradient(to bottom,transparent 28.6px,rgba(0,0,0,.05) 28.6px,rgba(0,0,0,.05) 31.4px,transparent 31.4px) 0 0/2px 60px repeat-y"></div>
<div class="a" style="left:737.9px;top:252px;width:2px;height:780px;background:linear-gradient(to bottom,transparent 28.6px,rgba(0,0,0,.05) 28.6px,rgba(0,0,0,.05) 31.4px,transparent 31.4px) 0 0/2px 60px repeat-y"></div>
<div class="a" style="left:843.4px;top:252px;width:2px;height:780px;background:linear-gradient(to bottom,transparent 28.6px,rgba(0,0,0,.05) 28.6px,rgba(0,0,0,.05) 31.4px,transparent 31.4px) 0 0/2px 60px repeat-y"></div>
<div class="a" style="left:1025px;top:252px;width:2px;height:780px;background:linear-gradient(to bottom,transparent 28.6px,rgba(0,0,0,.05) 28.6px,rgba(0,0,0,.05) 31.4px,transparent 31.4px) 0 0/2px 60px repeat-y"></div>
<div class="a" style="left:1172px;top:252px;width:2px;height:780px;background:linear-gradient(to bottom,transparent 28.6px,rgba(0,0,0,.05) 28.6px,rgba(0,0,0,.05) 31.4px,transparent 31.4px) 0 0/2px 60px repeat-y"></div>
<div class="a" style="left:1394.9px;top:252px;width:2px;height:780px;background:linear-gradient(to bottom,transparent 28.6px,rgba(0,0,0,.05) 28.6px,rgba(0,0,0,.05) 31.4px,transparent 31.4px) 0 0/2px 60px repeat-y"></div>
<div class="a" style="left:1497.1px;top:252px;width:2px;height:780px;background:linear-gradient(to bottom,transparent 28.6px,rgba(0,0,0,.05) 28.6px,rgba(0,0,0,.05) 31.4px,transparent 31.4px) 0 0/2px 60px repeat-y"></div>
<div class="a" style="left:1712.8px;top:252px;width:2px;height:780px;background:linear-gradient(to bottom,transparent 28.6px,rgba(0,0,0,.05) 28.6px,rgba(0,0,0,.05) 31.4px,transparent 31.4px) 0 0/2px 60px repeat-y"></div>
<div class="a" style="left:1918px;top:252px;width:2px;height:780px;background:linear-gradient(to bottom,transparent 28.6px,rgba(0,0,0,.05) 28.6px,rgba(0,0,0,.05) 31.4px,transparent 31.4px) 0 0/2px 60px repeat-y"></div>
<div class="a" style="left:1990.8px;top:252px;width:2px;height:780px;background:linear-gradient(to bottom,transparent 28.6px,rgba(0,0,0,.05) 28.6px,rgba(0,0,0,.05) 31.4px,transparent 31.4px) 0 0/2px 60px repeat-y"></div>
<div class="a" style="left:2090px;top:252px;width:2px;height:780px;background:linear-gradient(to bottom,transparent 28.6px,rgba(0,0,0,.05) 28.6px,rgba(0,0,0,.05) 31.4px,transparent 31.4px) 0 0/2px 60px repeat-y"></div>
<div class="a" style="left:2095.5px;top:180.8px;width:8.5px;height:456px;background:#224E73;border-radius:4.3px;"></div>
</section>
</main>
<footer class="a g" style="left:0;top:0;width:2152px;height:0">
<div class="a" style="left:288px;top:1133px;width:1855.6px;height:72px;background:#E5E5E5;"></div>
<p class="t" style="left:308.02px;top:1162px;font-size:15.8px;line-height:24px;color:#444C58;transform:scaleX(1.097);-webkit-text-stroke:0.4px #444C58;">Showing 1 to 25 of 199 results</p>
<span class="t" style="left:1712.33px;top:1162px;font-size:15.8px;line-height:24px;color:#3A5878;letter-spacing:0.17px;transform:scaleX(1.1);-webkit-text-stroke:0.25px #3A5878;">Results per page</span>
<div class="a" style="left:1862.9px;top:1155.2px;width:72px;height:35.6px;background:#FFFFFF;border-radius:6px;box-shadow:0 1px 2px rgba(0,0,0,.07);"></div>
<span class="t" style="left:1878.83px;top:1162px;font-size:13.7px;line-height:22px;color:#2E3B4E;transform:scaleX(1.045);-webkit-text-stroke:0.3px #2E3B4E;">25</span>
<svg class="a" style="left:1906.3px;top:1166px" width="14" height="14" viewBox="0 0 14 14" fill="none" stroke="#2E3B4E" stroke-width="2" stroke-linecap="round" stroke-linejoin="round"><path d="M2.9 4.8 7 9.2 11.1 4.8"/></svg>
<div class="a" style="left:1952.4px;top:1154.7px;width:166.8px;height:36.5px;background:#FFFFFF;border-radius:7px;box-shadow:0 1px 2px rgba(0,0,0,.07);"></div>
<div class="a" style="left:2048.8px;top:1154.7px;width:1px;height:36.5px;background:#D6D8DB;"></div>
<svg class="a" style="left:1963px;top:1164px" width="14" height="18" viewBox="0 0 14 18" fill="none" stroke="#C4C7CB" stroke-width="1.5" stroke-linecap="round" stroke-linejoin="round"><path d="M10.6 3.2 4.2 9.1 10.6 15"/></svg>
<span class="t" style="left:1980.78px;top:1162px;font-size:14.3px;line-height:22px;color:#C6C9CD;transform:scaleX(1.085);-webkit-text-stroke:0.25px #C6C9CD;">Previous</span>
<span class="t" style="left:2058.02px;top:1162px;font-size:14.3px;line-height:22px;color:#6A6F76;transform:scaleX(1.079);-webkit-text-stroke:0.3px #6A6F76;">Next</span>
<svg class="a" style="left:2094.6px;top:1164px" width="14" height="18" viewBox="0 0 14 18" fill="none" stroke="#6A6F76" stroke-width="1.5" stroke-linecap="round" stroke-linejoin="round"><path d="M3.7 3.2 10.2 9.1 3.7 15"/></svg>
</footer>
<div class="a" style="left:2143.6px;top:56px;width:8.4px;height:1149px;background:#FFFFFF;z-index:6;"></div>
<div class="a" style="left:2148.2px;top:64.7px;width:8px;height:1150.3px;background:#224E73;border-radius:4px;z-index:7;"></div>
</body>
</html>
